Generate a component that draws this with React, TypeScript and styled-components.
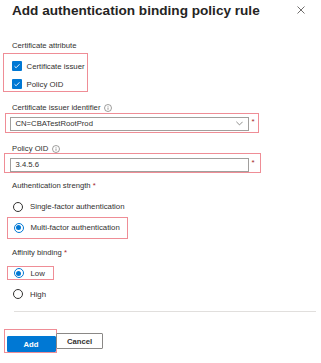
import styled, { createGlobalStyle } from "styled-components";

const GlobalStyle = createGlobalStyle`
  html, body {
    margin: 0;
    padding: 0;
    background: #ffffff;
  }
  body {
    font-family: "Liberation Sans", Arial, sans-serif;
    color: #323130;
  }
`;

const Page = styled.div`
  width: 321px;
  height: 363px;
  padding: 0 12px;
  box-sizing: border-box;
  overflow: hidden;
  white-space: nowrap;
`;

const Header = styled.div`
  display: flex;
  align-items: flex-start;
  justify-content: space-between;
  height: 22px;
`;

const Title = styled.h1`
  margin: 0;
  font-size: 13.6px;
  line-height: 22px;
  font-weight: 700;
  color: #252423;
`;

const CloseButton = styled.button`
  border: none;
  background: none;
  padding: 0;
  margin: 6px 4px 0 0;
  width: 8px;
  height: 8px;
  display: flex;
`;

const Label = styled.div<{ $top: number }>`
  margin-top: ${({ $top }) => $top}px;
  height: 10px;
  font-size: 7.7px;
  line-height: 10px;
  color: #323130;
  display: flex;
  align-items: center;
  gap: 4px;
`;

const Required = styled.span`
  color: #a4262c;
  margin-left: -2px;
`;

const Highlight = styled.div<{ $top: number; $left: number; $width: number; $pad: string }>`
  margin-top: ${({ $top }) => $top}px;
  margin-left: ${({ $left }) => $left}px;
  width: ${({ $width }) => $width}px;
  padding: ${({ $pad }) => $pad};
  border: 1.5px solid #ef8d96;
  box-sizing: border-box;
  flex-shrink: 0;
`;

const CheckList = styled.div`
  display: flex;
  flex-direction: column;
  gap: 6px;
`;

const OptionRow = styled.div<{ $top?: number; $gap?: number }>`
  margin-top: ${({ $top }) => $top ?? 0}px;
  display: flex;
  align-items: center;
  gap: ${({ $gap }) => $gap ?? 7}px;
  height: 12px;
  font-size: 7.8px;
  color: #323130;
`;

const CheckBox = styled.span`
  width: 10px;
  height: 10px;
  background: #0078d4;
  border-radius: 1px;
  display: flex;
  align-items: center;
  justify-content: center;
`;

const Radio = styled.span<{ $checked?: boolean }>`
  width: 10px;
  height: 10px;
  border-radius: 50%;
  border: 1px solid ${({ $checked }) => ($checked ? "#0078d4" : "#323130")};
  box-sizing: border-box;
  display: flex;
  align-items: center;
  justify-content: center;
  margin-left: 1px;
  &::after {
    content: "";
    display: ${({ $checked }) => ($checked ? "block" : "none")};
    width: 5px;
    height: 5px;
    border-radius: 50%;
    background: #0078d4;
  }
`;

const FieldRow = styled.div`
  display: flex;
  align-items: flex-start;
  gap: 3px;
`;

const Field = styled.div`
  width: 239px;
  height: 14px;
  border: 1px solid #a19f9d;
  box-sizing: border-box;
  display: flex;
  align-items: center;
  justify-content: space-between;
  padding: 0 5px;
  font-size: 7.7px;
  color: #323130;
`;

const Asterisk = styled.span`
  color: #a4262c;
  font-size: 8px;
  line-height: 8px;
  margin-top: 1px;
`;

const Divider = styled.div`
  margin: 11px -7px 0 2px;
  height: 1px;
  background: #e1dfdd;
`;

const Buttons = styled.div`
  display: flex;
  align-items: flex-start;
  margin-top: 17px;
`;

const Button = styled.button<{ $primary?: boolean }>`
  height: 16px;
  width: ${({ $primary }) => ($primary ? 49 : 47)}px;
  margin: ${({ $primary }) => ($primary ? "0" : "4px 0 0 -1px")};
  padding: 0;
  font-family: inherit;
  font-size: 7.7px;
  font-weight: 700;
  border-radius: 1px;
  border: 1px solid ${({ $primary }) => ($primary ? "#0078d4" : "#8a8886")};
  background: ${({ $primary }) => ($primary ? "#0078d4" : "#ffffff")};
  color: ${({ $primary }) => ($primary ? "#ffffff" : "#323130")};
`;

const Info = () => (
  <svg width="8" height="8" viewBox="0 0 16 16">
    <circle cx="8" cy="8" r="7" fill="none" stroke="#605e5c" strokeWidth="1.2" />
    <path d="M8 7v4.5" stroke="#605e5c" strokeWidth="1.3" />
    <circle cx="8" cy="4.8" r="0.9" fill="#605e5c" />
  </svg>
);

const Check = () => (
  <svg width="8" height="8" viewBox="0 0 16 16">
    <path d="M3 8.5l3.2 3L13 4.5" fill="none" stroke="#ffffff" strokeWidth="1.8" />
  </svg>
);

export default function App() {
  return (
    <Page>
      <GlobalStyle />
      <Header>
        <Title>Add authentication binding policy rule</Title>
        <CloseButton aria-label="Close">
          <svg width="8" height="8" viewBox="0 0 8 8">
            <path d="M0.5 0.5l7 7M7.5 0.5l-7 7" stroke="#605e5c" strokeWidth="0.9" />
          </svg>
        </CloseButton>
      </Header>

      <Label $top={19}>Certificate attribute</Label>
      <Highlight $top={2} $left={-9} $width={85} $pad="6px 0 1px 7.5px">
        <CheckList>
          <OptionRow $gap={5}>
            <CheckBox>
              <Check />
            </CheckBox>
            Certificate issuer
          </OptionRow>
          <OptionRow $gap={5}>
            <CheckBox>
              <Check />
            </CheckBox>
            Policy OID
          </OptionRow>
        </CheckList>
      </Highlight>

      <Label $top={11}>
        Certificate issuer identifier <Info />
      </Label>
      <Highlight $top={0} $left={-7} $width={254} $pad="2.5px 0 1.5px 3.5px">
        <FieldRow>
          <Field>
            CN=CBATestRootProd
            <svg width="7" height="5" viewBox="0 0 10 6">
              <path d="M0.5 0.5L5 5l4.5-4.5" fill="none" stroke="#605e5c" strokeWidth="1" />
            </svg>
          </Field>
          <Asterisk>*</Asterisk>
        </FieldRow>
      </Highlight>

      <Label $top={11}>
        Policy OID <Info />
      </Label>
      <Highlight $top={-1} $left={-8} $width={257} $pad="3.5px 0 0 4.5px">
        <FieldRow>
          <Field>3.4.5.6</Field>
          <Asterisk>*</Asterisk>
        </FieldRow>
      </Highlight>

      <Label $top={8}>
        Authentication strength <Required>*</Required>
      </Label>
      <OptionRow $top={10}>
        <Radio />
        Single-factor authentication
      </OptionRow>
      <Highlight $top={4} $left={-5} $width={121} $pad="4px 0 4px 4.5px">
        <OptionRow>
          <Radio $checked />
          Multi-factor authentication
        </OptionRow>
      </Highlight>

      <Label $top={9.5}>
        Affinity binding <Required>*</Required>
      </Label>
      <Highlight $top={7.5} $left={-5} $width={47} $pad="0.5px 0 0 4.5px">
        <OptionRow>
          <Radio $checked />
          Low
        </OptionRow>
      </Highlight>
      <OptionRow $top={8}>
        <Radio />
        High
      </OptionRow>

      <Divider />

      <Buttons>
        <Highlight $top={0} $left={-8} $width={53} $pad="2.5px 0 0 1.5px">
          <Button $primary>Add</Button>
        </Highlight>
        <Button>Cancel</Button>
      </Buttons>
    </Page>
  );
}
